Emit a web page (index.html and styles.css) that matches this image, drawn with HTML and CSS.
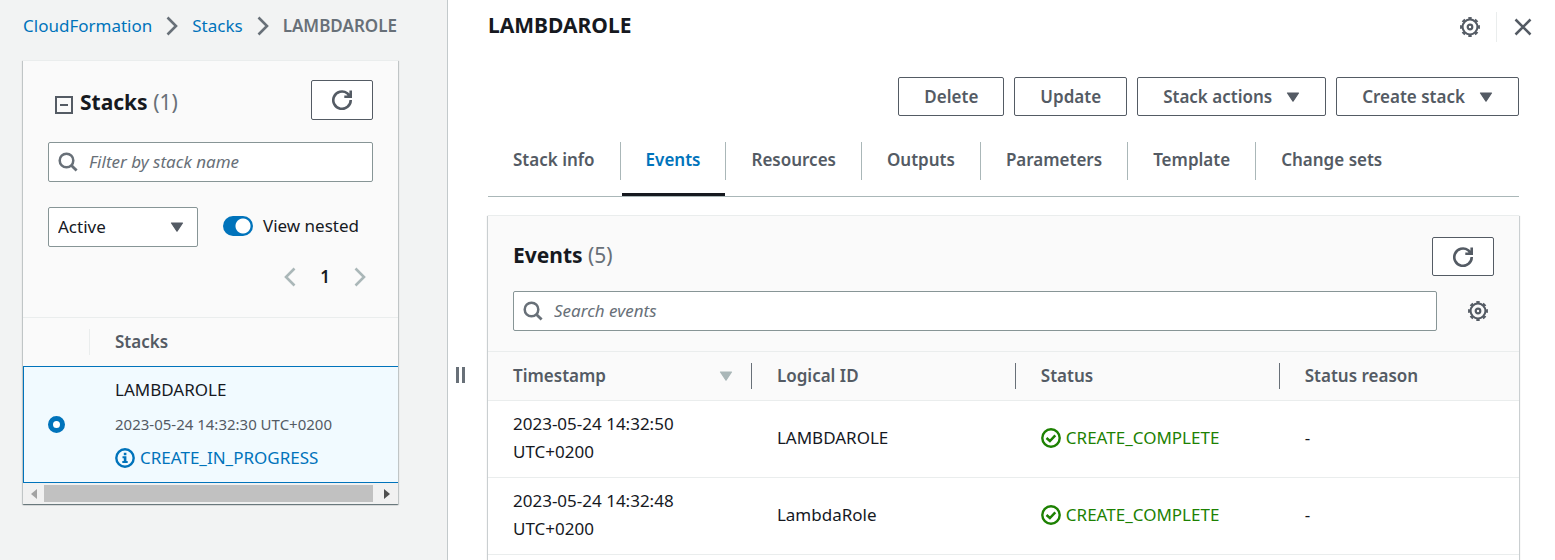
FILE: index.html
```
<!DOCTYPE html>
<html lang="en">
<head>
<meta charset="utf-8">
<title>CloudFormation - Stack LAMBDAROLE</title>
<link rel="stylesheet" href="styles.css">
</head>
<body>
<svg class="sprite" aria-hidden="true">
  <symbol id="i-refresh" viewBox="0 0 20 20"><path d="M18.700 10A8.700 8.700 0 1 1 15.200 3.200L18 6.400M18.700 0.500V6.700H12.300" fill="none" stroke="currentColor" stroke-width="2.600"/></symbol>
  <symbol id="i-search" viewBox="0 0 20 20"><circle cx="8.500" cy="8.500" r="6.800" fill="none" stroke="currentColor" stroke-width="2.500"/><path d="M13.200 13.200L18.600 18.600" stroke="currentColor" stroke-width="2.800"/></symbol>
  <symbol id="i-gear" viewBox="0 0 20 20"><g fill="none" stroke="currentColor"><circle cx="10" cy="10" r="7.400" stroke-width="2"/><circle cx="10" cy="10" r="9" stroke-width="1.900" pathLength="80" stroke-dasharray="5 5" stroke-dashoffset="2.500"/><circle cx="10" cy="10" r="2.300" stroke-width="2.200"/></g></symbol>
  <symbol id="i-caret" viewBox="0 0 14 10"><path d="M1.500 1H12.500L7 9.200Z" fill="currentColor" stroke="currentColor" stroke-width="1.200" stroke-linejoin="round"/></symbol>
  <symbol id="i-right" viewBox="0 0 12 20"><path d="M1.500 1.500L10 10L1.500 18.500" fill="none" stroke="currentColor" stroke-width="2.600"/></symbol>
  <symbol id="i-left" viewBox="0 0 12 20"><path d="M10.500 1.500L2 10L10.500 18.500" fill="none" stroke="currentColor" stroke-width="2.600"/></symbol>
  <symbol id="i-ok" viewBox="0 0 20 20"><circle cx="10" cy="10" r="8.700" fill="none" stroke="currentColor" stroke-width="2.400"/><path d="M5.500 10L8.900 13L14.300 7.400" fill="none" stroke="currentColor" stroke-width="2.500"/></symbol>
  <symbol id="i-info" viewBox="0 0 20 20"><circle cx="10" cy="10" r="8.700" fill="none" stroke="currentColor" stroke-width="2.400"/><path d="M8.800 4.800h2.600v2.400H8.800zM7.500 8.200h3.900v4.800h1.300v2H7.300v-2h1.500v-2.800H7.500z" fill="currentColor"/></symbol>
</svg>
<div class="app">
  <aside class="sidebar">
    <nav class="crumbs" aria-label="Breadcrumb">
      <a href="#">CloudFormation</a>
      <svg class="chevron"><use href="#i-right"/></svg>
      <a href="#">Stacks</a>
      <svg class="chevron"><use href="#i-right"/></svg>
      <span class="here">LAMBDAROLE</span>
    </nav>
    <section class="card">
      <div class="side-tools">
        <div class="title-row">
          <svg class="collapse" viewBox="0 0 18 18"><path d="M1 1H17V17H1ZM5 9H13" fill="none" stroke="currentColor" stroke-width="2"/></svg>
          <h2>Stacks <span class="count">(1)</span></h2>
          <button class="btn refresh" aria-label="Refresh stacks"><svg class="icon"><use href="#i-refresh"/></svg></button>
        </div>
        <label class="search"><svg class="icon"><use href="#i-search"/></svg><input type="text" placeholder="Filter by stack name" aria-label="Filter by stack name"></label>
        <div class="filters">
          <div class="select"><select aria-label="Status filter"><option>Active</option></select><svg class="caret"><use href="#i-caret"/></svg></div>
          <label class="toggle"><input type="checkbox" checked>View nested</label>
        </div>
        <div class="pages">
          <button aria-label="Previous page"><svg class="chevron"><use href="#i-left"/></svg></button>
          <button class="current">1</button>
          <button aria-label="Next page"><svg class="chevron"><use href="#i-right"/></svg></button>
        </div>
      </div>
      <table class="stacks">
        <thead><tr><th class="pick"><span class="divider"></span></th><th>Stacks</th></tr></thead>
        <tbody><tr>
          <td class="pick"><input type="radio" name="stack" checked aria-label="LAMBDAROLE"></td>
          <td>
            <div class="name">LAMBDAROLE</div>
            <div class="date">2023-05-24 14:32:30 UTC+0200</div>
            <div class="status progress"><svg class="icon"><use href="#i-info"/></svg>CREATE_IN_PROGRESS</div>
          </td>
        </tr></tbody>
      </table>
      <div class="scrollbar">
        <svg class="arrow faded" viewBox="0 0 6 10"><path d="M6 0V10L0 5Z" fill="currentColor"/></svg>
        <div class="thumb"></div>
        <svg class="arrow" viewBox="0 0 6 10"><path d="M0 0V10L6 5Z" fill="currentColor"/></svg>
      </div>
    </section>
  </aside>
  <div class="splitter"><span></span><span></span></div>
  <main class="detail">
    <header class="head">
      <h1>LAMBDAROLE</h1>
      <button class="plain" aria-label="Preferences"><svg class="icon"><use href="#i-gear"/></svg></button>
      <span class="rule"></span>
      <button class="plain" aria-label="Close"><svg class="close" viewBox="0 0 18 18"><path d="M1.500 1.500L16.500 16.500M16.500 1.500L1.500 16.500" stroke="currentColor" stroke-width="2.500"/></svg></button>
    </header>
    <div class="actions">
      <button class="btn">Delete</button>
      <button class="btn">Update</button>
      <button class="btn">Stack actions<svg class="caret"><use href="#i-caret"/></svg></button>
      <button class="btn">Create stack<svg class="caret"><use href="#i-caret"/></svg></button>
    </div>
    <nav class="tabs" aria-label="Stack details">
      <a href="#">Stack info</a>
      <a href="#" class="active">Events</a>
      <a href="#">Resources</a>
      <a href="#">Outputs</a>
      <a href="#">Parameters</a>
      <a href="#">Template</a>
      <a href="#">Change sets</a>
    </nav>
    <section class="card events">
      <div class="event-tools">
        <div class="title-row">
          <h2>Events <span class="count">(5)</span></h2>
          <button class="btn refresh" aria-label="Refresh events"><svg class="icon"><use href="#i-refresh"/></svg></button>
        </div>
        <div class="search-row">
          <label class="search"><svg class="icon"><use href="#i-search"/></svg><input type="text" placeholder="Search events" aria-label="Search events"></label>
          <button class="plain" aria-label="Table preferences"><svg class="icon"><use href="#i-gear"/></svg></button>
        </div>
      </div>
      <table class="log">
        <thead><tr>
          <th><div>Timestamp<svg class="caret sort"><use href="#i-caret"/></svg></div></th>
          <th><div>Logical ID</div></th>
          <th><div>Status</div></th>
          <th><div>Status reason</div></th>
        </tr></thead>
        <tbody>
          <tr><td>2023-05-24 14:32:50<br>UTC+0200</td><td>LAMBDAROLE</td><td><div class="status done"><svg class="icon"><use href="#i-ok"/></svg>CREATE_COMPLETE</div></td><td>-</td></tr>
          <tr><td>2023-05-24 14:32:48<br>UTC+0200</td><td>LambdaRole</td><td><div class="status done"><svg class="icon"><use href="#i-ok"/></svg>CREATE_COMPLETE</div></td><td>-</td></tr>
        </tbody>
      </table>
    </section>
  </main>
</div>
</body>
</html>
```
FILE: styles.css
```
* { box-sizing: border-box; }
body {
  margin: 0;
  font: 17px/28px "Noto Sans", "Open Sans", sans-serif;
  color: #16191f;
  background: #fff;
}
button, input, select { font: inherit; color: inherit; margin: 0; }
button { cursor: pointer; }
h1, h2 { margin: 0; font-size: 21px; line-height: 28px; font-weight: 700; }
a { color: #0073bb; text-decoration: none; }
svg { display: block; flex: none; }
.sprite { position: absolute; width: 0; height: 0; }
.icon { width: 20px; height: 20px; }
.caret { width: 14px; height: 10px; }
.chevron { width: 12px; height: 20px; }

.app { display: flex; height: 100vh; overflow: hidden; }
.sidebar {
  flex: none;
  width: 448px;
  padding: 12px 49px 0 23px;
  background: #f2f3f3;
  border-right: 1px solid #c3c9cb;
}
.crumbs { display: flex; align-items: center; gap: 14px; margin-bottom: 20px; color: #687078; white-space: nowrap; }
.here { font-weight: 600; }
.card {
  background: #fafafa;
  border-top: 1px solid #eaeded;
  box-shadow: 0 1px 1px 0 rgba(0, 28, 36, .4), 1px 1px 1px 0 rgba(0, 28, 36, .15), -1px 1px 1px 0 rgba(0, 28, 36, .15);
}
.side-tools { padding: 19px 25px 26px; border-bottom: 1px solid #eaeded; }
.title-row { display: flex; align-items: center; }
.title-row .refresh { margin-left: auto; }
.side-tools h2 { padding-top: 4px; }
.event-tools h2 { padding-bottom: 4px; }
.collapse { width: 18px; height: 18px; margin: 10px 7px 0 7px; color: #545b64; }
.count { color: #687078; font-weight: 400; }
.btn {
  display: flex;
  align-items: center;
  height: 40px;
  padding: 0 25px;
  border: 1px solid #545b64;
  border-radius: 2px;
  background: #fff;
  color: #545b64;
  font-weight: 600;
  white-space: nowrap;
}
.btn .caret { margin-left: 14px; }
.refresh { width: 62px; padding: 0 20px; }
.search {
  display: flex;
  align-items: center;
  height: 40px;
  padding: 0 9px;
  gap: 11px;
  border: 1px solid #879596;
  border-radius: 2px;
  background: #fff;
  color: #687078;
}
.search input { flex: 1; min-width: 0; padding: 0; border: 0; outline: 0; background: none; }
.search input::placeholder { color: #687078; opacity: 1; font-style: italic; }
.side-tools .search { margin: 22px 0 25px; }
.filters { display: flex; align-items: center; gap: 25px; }
.select { position: relative; width: 150px; color: #545b64; }
.select select {
  display: block;
  width: 100%;
  height: 40px;
  padding: 0 9px;
  border: 1px solid #879596;
  border-radius: 2px;
  background: #fff;
  color: #16191f;
  appearance: none;
}
.select .caret { position: absolute; right: 14px; top: 15px; pointer-events: none; }
.toggle { display: flex; align-items: center; gap: 10px; margin-bottom: 2px; white-space: nowrap; }
.toggle input {
  appearance: none;
  width: 30px;
  height: 20px;
  border-radius: 10px;
  background: radial-gradient(circle at 20px 10px, #fff 7px, #0073bb 8px);
}
.pages { display: flex; justify-content: flex-end; align-items: center; gap: 24px; margin-top: 16px; padding-right: 7px; }
.pages button { padding: 0; border: 0; background: none; color: #aab7b8; }
.pages .current { color: #16191f; font-weight: 600; }

table { width: 100%; border-collapse: separate; border-spacing: 0; }
th { text-align: left; font-weight: 600; color: #545b64; }
.stacks th { height: 48px; padding: 0 25px; }
.stacks th.pick { padding: 0; }
.stacks .pick { width: 67px; }
.divider { display: block; height: 26px; border-right: 1px solid #eaeded; }
.stacks td { padding: 9px 0 10px 25px; background: #f1faff; border: solid #0073bb; border-width: 1px 0; vertical-align: middle; }
.stacks td.pick { padding-left: 24px; border-left-width: 1px; }
.stacks input {
  appearance: none;
  display: block;
  width: 17px;
  height: 17px;
  border: 5px solid #0073bb;
  border-radius: 50%;
  background: #fff;
}
.date { margin: 6px 0; font-size: 15px; color: #545b64; }
.status { display: flex; align-items: center; gap: 5px; white-space: nowrap; }
.progress { color: #0073bb; }
.done { color: #1d8102; }
.scrollbar { display: flex; align-items: center; gap: 7px; height: 21px; padding: 0 8px; background: #f1f1f1; }
.scrollbar .thumb { flex: 1; height: 17px; background: #c1c1c1; margin-right: 4px; }
.arrow { width: 6px; height: 10px; color: #505050; }
.arrow.faded { color: #a3a3a3; }

.splitter { flex: none; width: 40px; display: flex; gap: 3px; padding: 367px 0 0 8px; }
.splitter span { width: 3px; height: 16px; background: #687078; }

.detail { flex: 1; min-width: 0; display: flex; flex-direction: column; padding-right: 36px; }
.head { display: flex; align-items: center; height: 54px; margin-right: -13px; }
.head h1 { margin-right: auto; padding-bottom: 4px; }
.plain { padding: 0; border: 0; background: none; color: #545b64; }
.rule { width: 1px; height: 30px; margin: 0 17px 0 16px; background: #eaeded; }
.close { width: 18px; height: 18px; }
.actions { display: flex; justify-content: flex-end; gap: 10px; margin: 23px 0 25px; }
.actions .btn, .events .refresh { height: 39px; }
.tabs { display: flex; border-bottom: 1px solid #aab7b8; margin-bottom: 18px; }
.tabs a {
  position: relative;
  height: 55px;
  padding: 5px 26px 0 25px;
  color: #545b64;
  font-weight: 600;
  white-space: nowrap;
}
.tabs a:not(:last-child)::after { content: ""; position: absolute; right: 0; top: 1px; height: 38px; width: 1px; background: #aab7b8; }
.tabs .active { color: #0073bb; }
.tabs .active::before { content: ""; position: absolute; left: 1px; right: 1px; bottom: 0; height: 3px; background: #16191f; }
.events { flex: 1; background: #fff; }
.event-tools { padding: 21px 25px 20px; background: #fafafa; border-bottom: 1px solid #eaeded; }
.search-row { display: flex; align-items: center; gap: 31px; margin-top: 15px; padding-right: 6px; }
.search-row .search { flex: 1; }
.log { table-layout: fixed; }
.log th { height: 49px; padding: 0; background: #fafafa; border-bottom: 1px solid #eaeded; }
.log th:not(:last-child) { width: 25.6%; }
.log th div { display: flex; align-items: center; height: 26px; line-height: 26px; padding: 0 18px 0 25px; border-right: 1px solid #687078; }
.log th:last-child div { border: 0; }
.log .sort { margin-left: auto; color: #aab7b8; }
.log td { height: 77px; padding: 8px 25px 10px; border-bottom: 1px solid #eaeded; }
```
